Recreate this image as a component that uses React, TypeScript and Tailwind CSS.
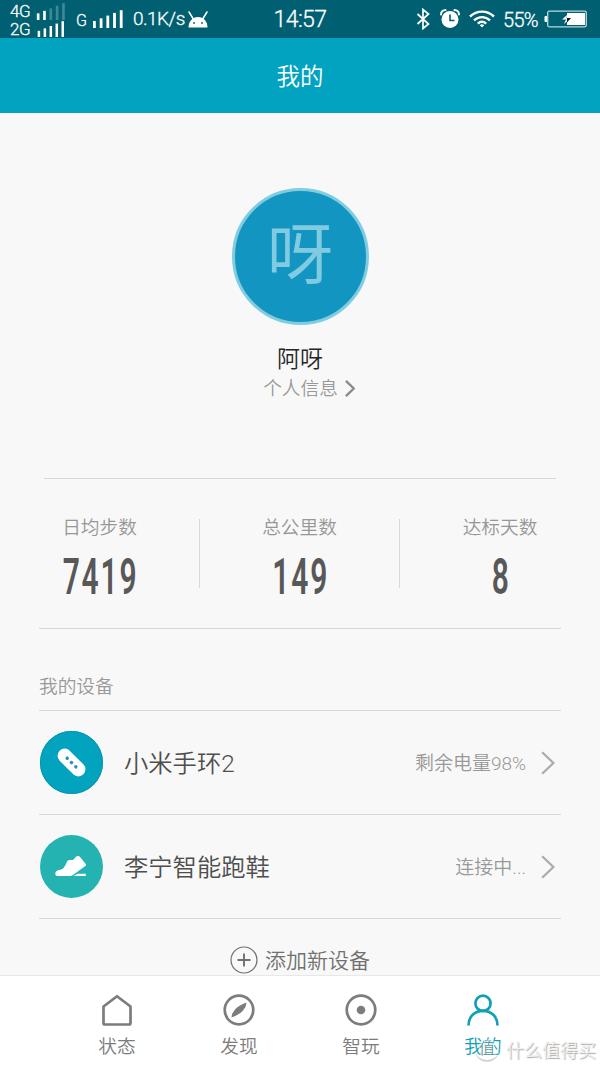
import * as React from "react";
import clsx from "clsx";

interface SignalBarsProps {
  active?: number;
  className?: string;
}

function SignalBars({ active = 5, className }: SignalBarsProps) {
  return (
    <svg viewBox="0 0 30 18" className={className} fill="white">
      {[0, 1, 2, 3, 4].map((i) => (
        <rect
          key={i}
          x={i * 6.7}
          y={11 - i * 2.7}
          width={2.8}
          height={7 + i * 2.7}
          opacity={i < active ? 1 : 0.25}
        />
      ))}
    </svg>
  );
}

function AndroidIcon() {
  return (
    <svg viewBox="0 0 20 17" className="ml-[3px] h-[17px] w-5" fill="white">
      <path d="M.5 16.5C.5 10.500 4.500 6 10 6s9.500 4.500 9.500 10.500z" />
      <path d="M1 1l4.300 7M19 1l-4.300 7" stroke="white" strokeWidth="1.5" strokeLinecap="round" />
      <circle cx="6" cy="12" r=".9" fill="#005f6e" />
      <circle cx="14" cy="12" r=".9" fill="#005f6e" />
    </svg>
  );
}

function StatusBar() {
  return (
    <div className="flex h-[38px] items-center bg-[#006071] text-white [-webkit-text-stroke:0.3px]">
      <div className="flex w-[266px] items-center pl-[10px]">
        <div className="flex flex-col pt-[2px] text-[17px] leading-[18px] tracking-tight">
          <div className="flex h-[18px] items-center">
            <span className="w-[26px]">4G</span>
            <SignalBars active={2} className="h-[17px] w-[30px]" />
          </div>
          <div className="flex h-[18px] items-center">
            <span className="w-[26px]">2G</span>
            <SignalBars className="h-[16px] w-[30px]" />
          </div>
        </div>
        <span className="mt-1 ml-[10px] w-[17px] text-[16px] leading-5">G</span>
        <SignalBars className="h-[18px] w-[30px]" />
        <span className="mt-px ml-[10px] text-[19px] tracking-[-0.5px]">0.1K/s</span>
        <AndroidIcon />
      </div>
      <span className="mt-[2px] w-[68px] text-center text-[23px] tracking-[-0.6px]">14:57</span>
      <div className="flex flex-1 items-center pl-[82px]">
        <svg viewBox="0 0 14 22" className="h-[22px] w-[14px]" fill="none" stroke="white" strokeWidth="1.7">
          <path d="M1.5 6l11 10L7 20.5v-19L12.5 6l-11 10" />
        </svg>
        <svg viewBox="0 0 20 20" className="ml-[10px] h-5 w-5">
          <path d="M1 5.5C1 3 3 1 5.5 1M19 5.5C19 3 17 1 14.5 1" stroke="white" strokeWidth="2" fill="none" strokeLinecap="round" />
          <circle cx="10" cy="10.5" r="8.5" fill="white" />
          <path d="M10 5.5v6h4.5" stroke="#006071" strokeWidth="1.6" fill="none" />
        </svg>
        <svg viewBox="0 0 26 18" className="ml-[9px] h-[18px] w-[26px]" fill="none" stroke="white" strokeWidth="2.4">
          <path d="M1 6.5c7-6.5 17-6.5 24 0M5 10.3c4.8-4.3 11.2-4.3 16 0M8.8 13.7c2.5-2.2 5.9-2.2 8.4 0" />
          <path d="M10.8 15.2q2.2-1.8 4.4 0L13 17.6z" fill="white" stroke="none" />
        </svg>
        <span className="mt-[2px] ml-2 w-[37px] text-[20px] tracking-[-0.7px] whitespace-nowrap">55%</span>
        <svg viewBox="0 0 44 18" className="ml-[4px] h-[18px] w-[44px]">
          <path d="M3 6H1.5Q.5 6 .5 7v4q0 1 1 1H3z" fill="white" />
          <rect x="3.7" y="1.2" width="38.6" height="15.6" rx="1.5" fill="none" stroke="white" strokeOpacity=".75" strokeWidth="1.3" />
          <rect x="23" y="3" width="18" height="12" fill="white" />
          <path d="M23 5l-5 4.5h4L20 14l6-5.5h-3.5z" fill="white" />
          <path d="M23 8h4l-4 4.5z" fill="#111" />
        </svg>
      </div>
    </div>
  );
}

interface ChevronProps {
  className?: string;
  strokeWidth?: number;
}

function Chevron({ className, strokeWidth = 2.2 }: ChevronProps) {
  return (
    <svg viewBox="0 0 14 24" className={className} fill="none" stroke="currentColor" strokeWidth={strokeWidth}>
      <path d="M1.2 1.2L12.4 12 1.2 22.8" />
    </svg>
  );
}

function Profile() {
  return (
    <section className="flex flex-col items-center pt-[75px]">
      <div className="flex size-[137px] items-center justify-center rounded-full border-[3px] border-[#80cce0] bg-[#1295c0]">
        <span className="-mt-[2px] text-[66px] leading-none font-normal text-[#80cbe2]">呀</span>
      </div>
      <h2 className="mt-[19px] text-[23px] leading-8 text-[#262626]">阿呀</h2>
      <button className="-mt-px ml-[18px] flex h-7 items-center text-[18.7px] text-[#999]">
        <span className="mt-px">个人信息</span>
        <Chevron className="-mt-px ml-[7px] h-[17px] w-[10px] text-[#8c8c8c]" strokeWidth={3.4} />
      </button>
    </section>
  );
}

const stats = [
  { label: "日均步数", value: "7419" },
  { label: "总公里数", value: "149" },
  { label: "达标天数", value: "8" },
];

function Stats() {
  return (
    <section className="mt-[75px]">
      <div className="mx-[44px] h-px bg-[#d8d8d8]" />
      <div className="mt-10 grid h-[69px] grid-cols-3 grid-rows-[69px] divide-x divide-[#d8d8d8]">
        {stats.map((stat) => (
          <div key={stat.label} className="flex flex-col items-center">
            <span className="mt-[-4px] text-[18.7px] leading-[26px] text-[#979797]">{stat.label}</span>
            <span className="mt-3 scale-x-[.6] pl-[3px] text-[50px] leading-[49px] font-semibold tracking-[3px] text-[#585858]">
              {stat.value}
            </span>
          </div>
        ))}
      </div>
      <div className="mx-[39px] mt-10 h-px bg-[#d8d8d8]" />
    </section>
  );
}

function BandIcon() {
  return (
    <svg viewBox="0 0 62 62" className="size-[63px]">
      <circle cx="31" cy="31" r="31" fill="#02a3be" />
      <circle cx="31" cy="31" r="30.5" fill="none" stroke="#0897af" />
      <g transform="rotate(45 31 31)">
        <rect x="14.5" y="24" width="33" height="14" rx="7" fill="white" />
        <circle cx="25" cy="31" r="1.7" fill="#2a91bd" />
        <circle cx="31" cy="31" r="1.7" fill="#2a91bd" />
        <circle cx="37" cy="31" r="1.7" fill="#2a91bd" />
      </g>
    </svg>
  );
}

function ShoeIcon() {
  return (
    <svg viewBox="0 0 62 62" className="size-[63px]">
      <circle cx="31" cy="31" r="31" fill="#25b3b2" />
      <path
        d="M15 38c0-2.200 2-3.200 5-3.800 3-.6 4.500-3 6.200-7.200.8-2 2-2.700 3.700-2.400 2.600.4 3.300-.6 4.800-2.500 1.500-1.700 3.400-1.900 4.700-.4l5.600 6.900c.6.8.4 1.300-.4 1.900l-10.500 7.600c-2 1.500-3.200 2.300-5.400 2.300H17c-1.300 0-2-1-2-2.400z"
        fill="white"
      />
      <path d="M33 40.400l4-2.200h8v2.200z" fill="white" />
    </svg>
  );
}

interface DeviceRowProps {
  icon: React.ReactNode;
  name: string;
  status: string;
}

function DeviceRow({ icon, name, status }: DeviceRowProps) {
  return (
    <li className="flex h-[104px] items-center border-b border-[#d8d8d8] pr-[6px] pl-px">
      {icon}
      <span className="mt-[3px] ml-[21px] flex-1 text-[24.3px] text-[#4e4e4e]">{name}</span>
      <span className="mt-[3px] text-[19px] text-[#999]">{status}</span>
      <Chevron className="ml-[15px] h-6 w-[14px] text-[#aaa]" />
    </li>
  );
}

function Devices() {
  return (
    <section className="mx-[39px]">
      <h3 className="flex h-[82px] items-end border-b border-[#d8d8d8] pb-[9px] text-[18.7px] leading-7 text-[#999]">
        我的设备
      </h3>
      <ul>
        <DeviceRow icon={<BandIcon />} name="小米手环2" status="剩余电量98%" />
        <DeviceRow icon={<ShoeIcon />} name="李宁智能跑鞋" status="连接中..." />
      </ul>
      <button className="mx-auto mt-[26px] flex h-[30px] items-center text-[21px] text-[#707070]">
        <svg viewBox="0 0 28 28" className="mr-[7px] size-7" fill="none" stroke="currentColor">
          <circle cx="14" cy="14" r="13" strokeWidth="1.2" />
          <path d="M14 7.5v13M7.5 14h13" strokeWidth="1.9" />
        </svg>
        <span className="mt-[3px]">添加新设备</span>
      </button>
    </section>
  );
}

const tabs = [
  {
    label: "状态",
    icon: <path d="M2.5 12.5L16 2.2l13.5 10.300V29q0 1.500-1.500 1.500H4Q2.500 30.500 2.500 29z" strokeLinejoin="round" />,
  },
  {
    label: "发现",
    icon: (
      <>
        <circle cx="16" cy="16" r="14.3" />
        <path d="M23.500 8.500q0 4-3.500 8t-11.500 7q0-4 3.500-8t11.500-7z" fill="currentColor" stroke="none" />
      </>
    ),
  },
  {
    label: "智玩",
    icon: (
      <>
        <circle cx="16" cy="16" r="14.3" />
        <circle cx="16" cy="16" r="4.3" fill="currentColor" stroke="none" />
      </>
    ),
  },
  {
    label: "我的",
    icon: (
      <>
        <circle cx="16" cy="9.3" r="7.6" />
        <path d="M1.500 31.500c0-9 6.300-14.700 14.500-14.700s14.500 5.700 14.500 14.700" />
      </>
    ),
  },
];

function TabBar() {
  const current = 3;

  return (
    <nav className="relative h-[92px] border-t border-[#e8e8e8] bg-white px-[56px]">
      <div className="grid grid-cols-4">
        {tabs.map((tab, index) => (
          <button
            key={tab.label}
            className={clsx(
              "flex flex-col items-center pt-[18px]",
              index === current ? "text-[#109fb6]" : "text-[#7c7c7c]"
            )}
          >
            <svg viewBox="0 0 32 32" className="size-8" fill="none" stroke="currentColor" strokeWidth="2.7">
              {tab.icon}
            </svg>
            <span className="mt-2 text-[18.7px] leading-[26px]">{tab.label}</span>
          </button>
        ))}
      </div>

      {/* Watermark */}
      <div className="absolute top-[61px] left-[475px] flex h-[26px] items-center">
        <span className="flex size-6 items-center justify-center rounded-full border-b-2 border-[#d5d5d5] text-[16px] text-[#5f9aa4] [text-shadow:0_0_1px_white,0_0_2px_white,0_0_2px_white,0_0_3px_white,0_0_3px_white]">
          值
        </span>
        <span className="mt-px ml-[7px] text-[18px] whitespace-nowrap text-[#f0f0f0] [text-shadow:1px_1px_1px_#aaa]">
          什么值得买
        </span>
      </div>
    </nav>
  );
}

export default function App() {
  return (
    <div className="flex h-[1067px] w-[600px] flex-col overflow-hidden bg-[#f8f8f8] font-[Roboto,'Noto_Sans_CJK_SC',sans-serif] font-[350]">
      <StatusBar />
      <header className="flex h-[75px] shrink-0 items-center justify-center bg-[#02a3c0]">
        <h1 className="mt-[2px] text-[23.5px] leading-8 text-white">我的</h1>
      </header>
      <main className="min-h-0 flex-1 overflow-hidden">
        <Profile />
        <Stats />
        <Devices />
      </main>
      <TabBar />
    </div>
  );
}
